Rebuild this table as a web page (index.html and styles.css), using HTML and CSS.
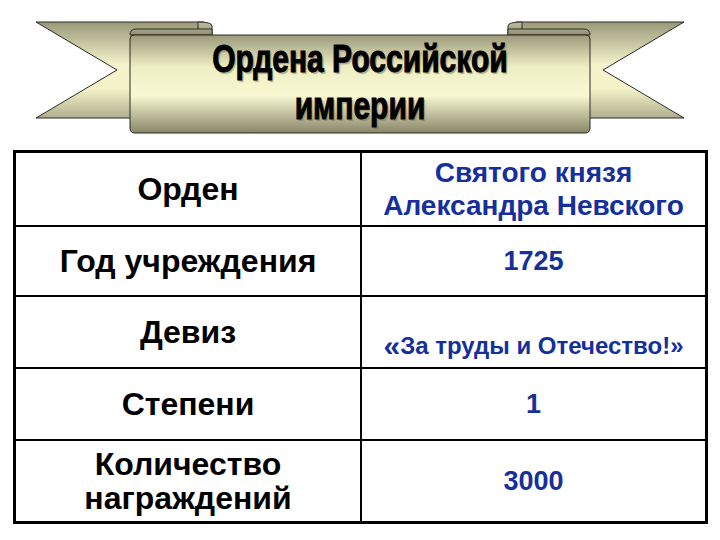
FILE: index.html
```html
<!DOCTYPE html>
<html lang="ru">
<head>
<meta charset="utf-8">
<title>Ордена Российской империи</title>
<link rel="stylesheet" href="styles.css">
</head>
<body>
<div class="page">
  <header class="banner">
    <svg class="ribbon" width="720" height="150" viewBox="0 0 720 150" xmlns="http://www.w3.org/2000/svg">
      <defs>
        <linearGradient id="gTail" x1="0" y1="22" x2="0" y2="118" gradientUnits="userSpaceOnUse">
          <stop offset="0" stop-color="#9a987a"/>
          <stop offset="0.45" stop-color="#f4f4cc"/>
          <stop offset="0.7" stop-color="#f2f1c8"/>
          <stop offset="1" stop-color="#b0ae8f"/>
        </linearGradient>
        <linearGradient id="gBody" x1="0" y1="35" x2="0" y2="133" gradientUnits="userSpaceOnUse">
          <stop offset="0" stop-color="#9b997a"/>
          <stop offset="0.33" stop-color="#efefc5"/>
          <stop offset="0.62" stop-color="#f7f7d2"/>
          <stop offset="1" stop-color="#888667"/>
        </linearGradient>
        <linearGradient id="gRoll" x1="0" y1="20" x2="0" y2="36" gradientUnits="userSpaceOnUse">
          <stop offset="0" stop-color="#c9c8a6"/>
          <stop offset="1" stop-color="#8d8b6c"/>
        </linearGradient>
      </defs>
      <g stroke="#2a2a22" stroke-width="1" stroke-linejoin="round">
        <path d="M36,22 H204 V118 H36 L117,70 Z" fill="url(#gTail)"/>
        <path d="M684,22 H516 V118 H684 L603,70 Z" fill="url(#gTail)"/>
        <path d="M198,22 Q212,22 212,26 V36 H198 Z" fill="url(#gRoll)"/>
        <path d="M522,22 Q508,22 508,26 V36 H522 Z" fill="url(#gRoll)"/>
        <path d="M136,29 H212 V35 H130 Q130,29 136,29 Z" fill="url(#gRoll)"/>
        <path d="M584,29 H508 V35 H590 Q590,29 584,29 Z" fill="url(#gRoll)"/>
        <path d="M134,35 H586 Q590,35 590,39 V128 Q590,133 585,133 H135 Q130,133 130,128 V39 Q130,35 134,35 Z" fill="url(#gBody)"/>
      </g>
    </svg>
    <h1 class="title"><span class="line">Ордена Российской</span><span class="line">империи</span></h1>
  </header>
  <section class="table">
    <div class="cell key">Орден</div>
    <div class="cell val">Святого князя<br>Александра Невского</div>
    <div class="cell key">Год учреждения</div>
    <div class="cell val num">1725</div>
    <div class="cell key">Девиз</div>
    <div class="cell val motto"><span class="quote">«</span>За труды и Отечество!»</div>
    <div class="cell key">Степени</div>
    <div class="cell val num">1</div>
    <div class="cell key">Количество<br>награждений</div>
    <div class="cell val num">3000</div>
  </section>
</div>
</body>
</html>
```
FILE: styles.css
```css
body {
  margin: 0;
  background: #ffffff;
  font-family: "Liberation Sans", Arial, sans-serif;
}

.page {
  width: 720px;
  height: 540px;
}

.banner {
  display: grid;
  height: 150px;
}

.banner > * {
  grid-area: 1 / 1;
}

.ribbon {
  display: block;
}

.title {
  margin: 0;
  padding-top: 36px;
  display: flex;
  flex-direction: column;
  align-items: center;
  font-size: 38px;
  line-height: 47px;
  font-weight: bold;
  color: #000;
  -webkit-text-stroke: 1px #000;
  text-shadow: 2px 2px 1px rgba(110, 108, 80, 0.5);
  transform: scaleX(0.79);
  transform-origin: 50% 0;
}

.table {
  display: grid;
  grid-template-columns: 344px 343px;
  grid-template-rows: 72px 68px 70px 70px 80px;
  gap: 2px;
  width: fit-content;
  margin-left: 13px;
  background: #000;
  border: 3px solid #000;
}

.cell {
  background: #ffffff;
  display: flex;
  align-items: center;
  justify-content: center;
  text-align: center;
  font-weight: bold;
}

.key {
  font-size: 32px;
  line-height: 34px;
  color: #000;
}

.val {
  font-size: 28px;
  line-height: 33px;
  color: #15309c;
}

.num {
  font-size: 27px;
}

.motto {
  padding-top: 26px;
  font-size: 24px;
}

.quote {
  font-size: 30px;
}
```
